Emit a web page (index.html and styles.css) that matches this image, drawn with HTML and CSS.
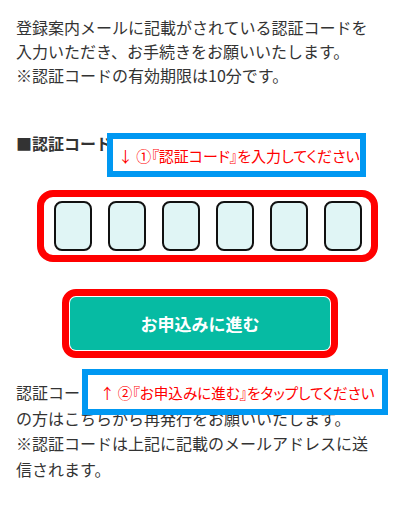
FILE: index.html
```html
<!DOCTYPE html>
<html lang="ja">
<head>
<meta charset="utf-8">
<title>認証コード入力</title>
<link rel="stylesheet" href="styles.css">
</head>
<body>
<div class="page">
  <p class="lead">登録案内メールに記載がされている認証コードを<br>入力いただき、お手続きをお願いいたします。<br>※認証コードの有効期限は10分です。</p>
  <div class="label">■認証コード</div>
  <div class="code-frame">
    <span class="code-box"></span>
    <span class="code-box"></span>
    <span class="code-box"></span>
    <span class="code-box"></span>
    <span class="code-box"></span>
    <span class="code-box"></span>
  </div>
  <div class="btn-frame">
    <button class="btn">お申込みに進む</button>
  </div>
  <p class="note">認証コードが届かない、または有効期限切れ<br>の方はこちらから再発行をお願いいたします。<br>※認証コードは上記に記載のメールアドレスに送<br>信されます。</p>

  <div class="callout callout-1">↓ ①『認証コード』を入力してください</div>
  <div class="callout callout-2">↑ ②『お申込みに進む』をタップしてください</div>
</div>
</body>
</html>
```
FILE: styles.css
```css
html, body {
  margin: 0;
  padding: 0;
  background: #fff;
}
.page {
  position: relative;
  width: 400px;
  height: 509px;
  box-sizing: border-box;
  padding: 15px 16px 0;
  font-family: "Noto Sans CJK JP", "Noto Sans", sans-serif;
  color: #333;
  font-size: 16px;
  overflow: hidden;
}
.lead {
  margin: 0;
  line-height: 24px;
  white-space: nowrap;
}
.label {
  margin-top: 44px;
  line-height: 24px;
  font-weight: bold;
}
.code-frame {
  margin: 35px 0 0 21px;
  width: 341px;
  height: 72px;
  box-sizing: border-box;
  border: 7px solid #ff0000;
  border-radius: 16px;
  padding: 4px 9px 4px 10px;
  display: flex;
  gap: 16px;
}
.code-box {
  width: 38px;
  height: 50px;
  box-sizing: border-box;
  border: 2px solid #111;
  border-radius: 8px;
  background: #e0f5f5;
}
.btn-frame {
  margin: 27px auto 0;
  width: 276px;
  height: 69px;
  box-sizing: border-box;
  border: 7px solid #ff0000;
  border-radius: 14px;
  padding: 1px;
  background: #fff;
  display: flex;
}
.btn {
  flex: 1;
  border: none;
  border-radius: 6px;
  background: #06bba3;
  color: #fff;
  font-family: "Noto Sans CJK JP", "Noto Sans", sans-serif;
  font-size: 17px;
  font-weight: bold;
  padding: 0;
}
.note {
  margin: 22px 0 0;
  line-height: 25.6px;
  white-space: nowrap;
}
.callout {
  position: absolute;
  box-sizing: border-box;
  border: 6px solid #0098f2;
  background: #fff;
  color: #ff0000;
  font-feature-settings: "palt";
  display: flex;
  align-items: center;
  white-space: nowrap;
}
.callout-1 {
  left: 107px;
  top: 133px;
  width: 259px;
  height: 44px;
  padding-left: 5px;
  font-size: 15px;
}
.callout-2 {
  left: 82px;
  top: 369px;
  width: 306px;
  height: 46px;
  padding-left: 12px;
  font-size: 14.6px;
}
```
